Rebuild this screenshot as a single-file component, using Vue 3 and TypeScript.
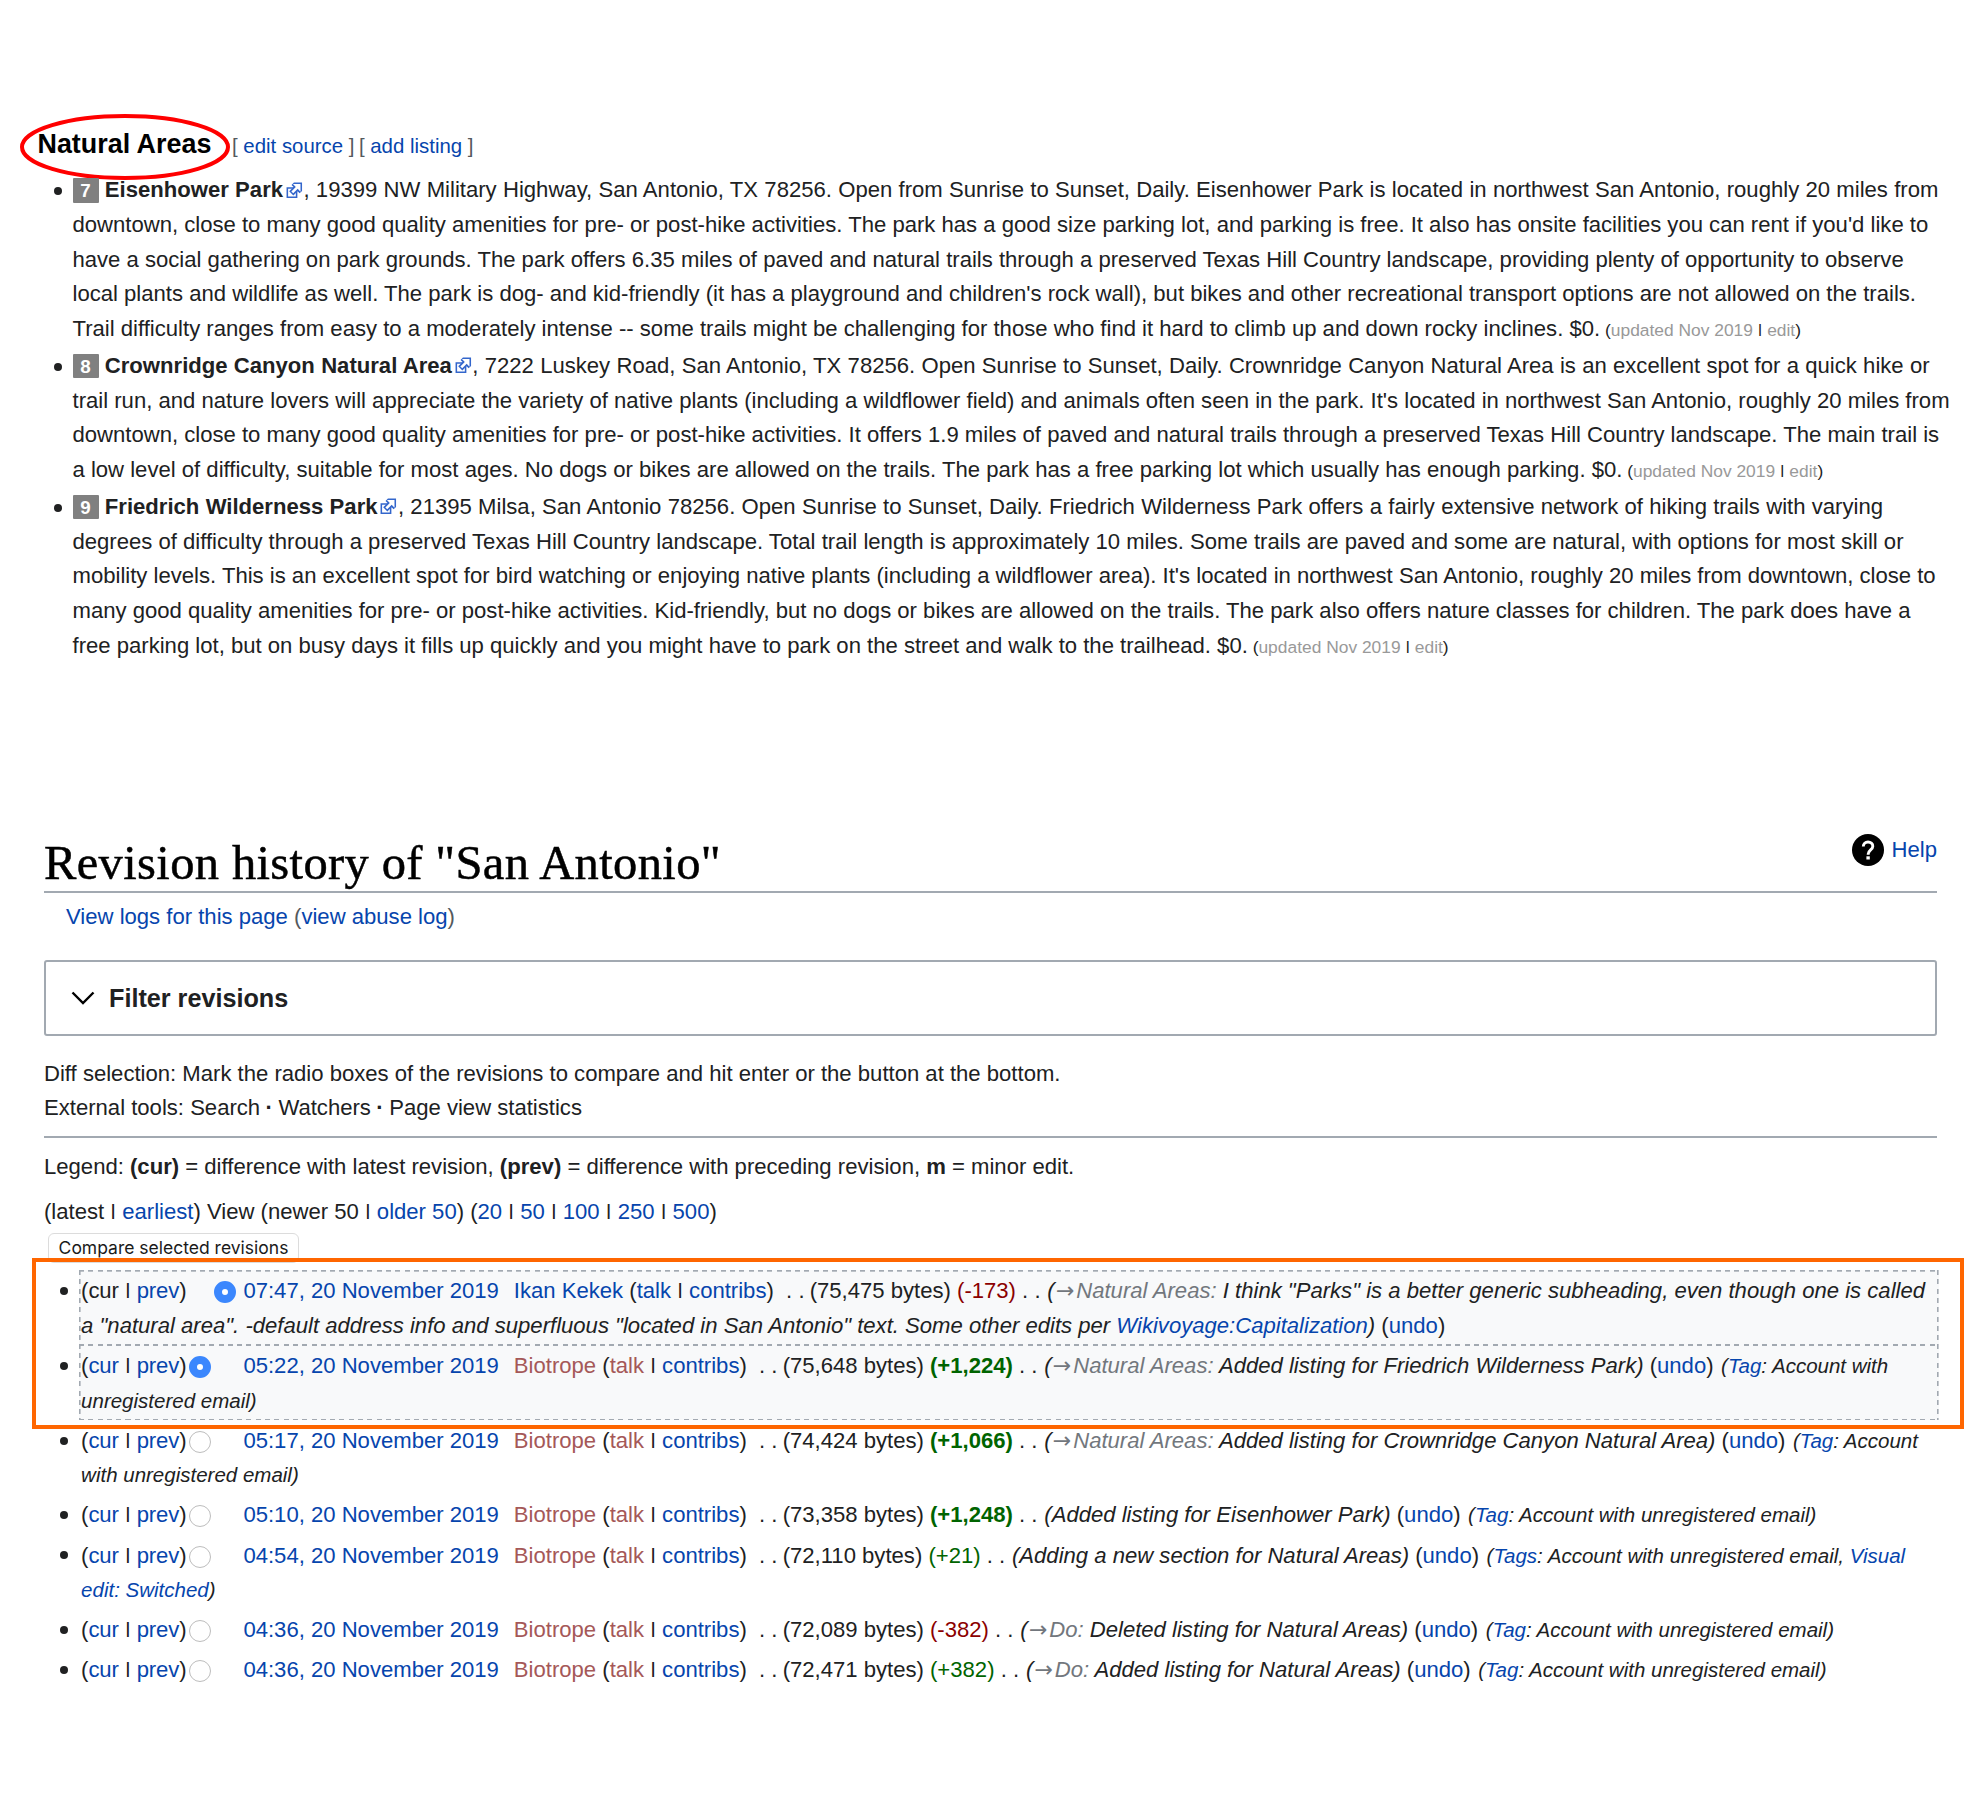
<script setup lang="ts">
type Seg = [text: string, cls?: string]

interface Listing {
  marker: number
  name: string
  lines: string[]
}

interface Revision {
  current?: boolean
  selected?: boolean
  time: string
  user: string
  userClass: string
  bytes: string
  delta: string
  deltaClass: string
  comment: Seg[]
  more?: Seg[]
}

const listings: Listing[] = [
  {
    marker: 7,
    name: 'Eisenhower Park',
    lines: [
      ', 19399 NW Military Highway, San Antonio, TX 78256. Open from Sunrise to Sunset, Daily. Eisenhower Park is located in northwest San Antonio, roughly 20 miles from',
      'downtown, close to many good quality amenities for pre- or post-hike activities. The park has a good size parking lot, and parking is free. It also has onsite facilities you can rent if you\'d like to',
      'have a social gathering on park grounds. The park offers 6.35 miles of paved and natural trails through a preserved Texas Hill Country landscape, providing plenty of opportunity to observe',
      'local plants and wildlife as well. The park is dog- and kid-friendly (it has a playground and children\'s rock wall), but bikes and other recreational transport options are not allowed on the trails.',
      'Trail difficulty ranges from easy to a moderately intense -- some trails might be challenging for those who find it hard to climb up and down rocky inclines. $0.',
    ],
  },
  {
    marker: 8,
    name: 'Crownridge Canyon Natural Area',
    lines: [
      ', 7222 Luskey Road, San Antonio, TX 78256. Open Sunrise to Sunset, Daily. Crownridge Canyon Natural Area is an excellent spot for a quick hike or',
      'trail run, and nature lovers will appreciate the variety of native plants (including a wildflower field) and animals often seen in the park. It\'s located in northwest San Antonio, roughly 20 miles from',
      'downtown, close to many good quality amenities for pre- or post-hike activities. It offers 1.9 miles of paved and natural trails through a preserved Texas Hill Country landscape. The main trail is',
      'a low level of difficulty, suitable for most ages. No dogs or bikes are allowed on the trails. The park has a free parking lot which usually has enough parking. $0.',
    ],
  },
  {
    marker: 9,
    name: 'Friedrich Wilderness Park',
    lines: [
      ', 21395 Milsa, San Antonio 78256. Open Sunrise to Sunset, Daily. Friedrich Wilderness Park offers a fairly extensive network of hiking trails with varying',
      'degrees of difficulty through a preserved Texas Hill Country landscape. Total trail length is approximately 10 miles. Some trails are paved and some are natural, with options for most skill or',
      'mobility levels. This is an excellent spot for bird watching or enjoying native plants (including a wildflower area). It\'s located in northwest San Antonio, roughly 20 miles from downtown, close to',
      'many good quality amenities for pre- or post-hike activities. Kid-friendly, but no dogs or bikes are allowed on the trails. The park also offers nature classes for children. The park does have a',
      'free parking lot, but on busy days it fills up quickly and you might have to park on the street and walk to the trailhead. $0.',
    ],
  },
]

const pager: Seg[] = [
  ['(latest '], ['|', 'bar'], [' '], ['earliest', 'link'], [') View (newer 50 '], ['|', 'bar'], [' '],
  ['older 50', 'link'], [') ('], ['20', 'link'], [' '], ['|', 'bar'], [' '], ['50', 'link'], [' '], ['|', 'bar'],
  [' '], ['100', 'link'], [' '], ['|', 'bar'], [' '], ['250', 'link'], [' '], ['|', 'bar'], [' '], ['500', 'link'], [')'],
]

const undo: Seg[] = [[' ('], ['undo', 'link'], [')']]

const revisions: Revision[] = [
  {
    current: true, selected: true, time: '07:47, 20 November 2019', user: 'Ikan Kekek', userClass: 'link',
    bytes: '75,475', delta: '(-173)', deltaClass: 'minus',
    comment: [['(', 'it'], ['→', 'arrow'], ['Natural Areas: ', 'it grey'], ['I think "Parks" is a better generic subheading, even though one is called', 'it']],
    more: [
      ['a "natural area". -default address info and superfluous "located in San Antonio" text. Some other edits per ', 'it'],
      ['Wikivoyage:Capitalization', 'it link'], [')', 'it'], ...undo,
    ],
  },
  {
    selected: true, time: '05:22, 20 November 2019', user: 'Biotrope', userClass: 'red',
    bytes: '75,648', delta: '(+1,224)', deltaClass: 'plus strong',
    comment: [['(', 'it'], ['→', 'arrow'], ['Natural Areas: ', 'it grey'], ['Added listing for Friedrich Wilderness Park)', 'it'], ...undo,
      [' (', 'tag first'], ['Tag', 'tag link'], [': Account with', 'tag']],
    more: [['unregistered email)', 'tag']],
  },
  {
    time: '05:17, 20 November 2019', user: 'Biotrope', userClass: 'red',
    bytes: '74,424', delta: '(+1,066)', deltaClass: 'plus strong',
    comment: [['(', 'it'], ['→', 'arrow'], ['Natural Areas: ', 'it grey'], ['Added listing for Crownridge Canyon Natural Area)', 'it'], ...undo,
      [' (', 'tag first'], ['Tag', 'tag link'], [': Account', 'tag']],
    more: [['with unregistered email)', 'tag']],
  },
  {
    time: '05:10, 20 November 2019', user: 'Biotrope', userClass: 'red',
    bytes: '73,358', delta: '(+1,248)', deltaClass: 'plus strong',
    comment: [['(Added listing for Eisenhower Park)', 'it'], ...undo,
      [' (', 'tag first'], ['Tag', 'tag link'], [': Account with unregistered email)', 'tag']],
  },
  {
    time: '04:54, 20 November 2019', user: 'Biotrope', userClass: 'red',
    bytes: '72,110', delta: '(+21)', deltaClass: 'plus',
    comment: [['(Adding a new section for Natural Areas)', 'it'], ...undo,
      [' (', 'tag first'], ['Tags', 'tag link'], [': Account with unregistered email, ', 'tag'], ['Visual', 'tag link']],
    more: [['edit: Switched', 'tag link'], [')', 'tag']],
  },
  {
    time: '04:36, 20 November 2019', user: 'Biotrope', userClass: 'red',
    bytes: '72,089', delta: '(-382)', deltaClass: 'minus',
    comment: [['(', 'it'], ['→', 'arrow'], ['Do: ', 'it grey'], ['Deleted listing for Natural Areas)', 'it'], ...undo,
      [' (', 'tag first'], ['Tag', 'tag link'], [': Account with unregistered email)', 'tag']],
  },
  {
    time: '04:36, 20 November 2019', user: 'Biotrope', userClass: 'red',
    bytes: '72,471', delta: '(+382)', deltaClass: 'plus',
    comment: [['(', 'it'], ['→', 'arrow'], ['Do: ', 'it grey'], ['Added listing for Natural Areas)', 'it'], ...undo,
      [' (', 'tag first'], ['Tag', 'tag link'], [': Account with unregistered email)', 'tag']],
  },
]
</script>

<template>
  <main class="page">
    <section class="areas">
      <header class="areas-head">
        <h3>
          Natural Areas
          <svg class="ellipse" viewBox="0 0 210 66"><ellipse cx="105" cy="33" rx="103" ry="31" /></svg>
        </h3>
        <span class="edit"><i>[</i> <a>edit source</a> <i>]</i></span>
        <span class="edit"><i>[</i> <a>add listing</a> <i>]</i></span>
      </header>
      <ul class="listings">
        <li v-for="l in listings" :key="l.marker" class="listing">
          <div v-for="(line, i) in l.lines" :key="i" class="line">
            <template v-if="i === 0">
              <span class="marker">{{ l.marker }}</span><b>{{ l.name }}</b><svg class="ext" viewBox="0 0 12 12">
                <path fill="#fff" stroke="#36c" d="M1.5 4.518h5.982V10.5H1.5z" />
                <path fill="#36c" d="M5.765 1H11v5.39L9.427 7.937l-1.31-1.31L5.393 9.35l-2.69-2.688 2.81-2.808L4.2 2.544z" />
                <path fill="#fff" d="M9.995 2.004l.022 4.885L8.2 5.07 5.32 7.95 4.09 6.723l2.882-2.88-1.85-1.852z" />
              </svg>
            </template><span>{{ line }}</span><span v-if="i === l.lines.length - 1" class="updated"> (<i>updated Nov 2019</i> <span class="bar">|</span> <i>edit</i>)</span>
          </div>
        </li>
      </ul>
    </section>

    <section class="history">
      <header class="title">
        <h1>Revision history of "San Antonio"</h1>
        <div class="help">
          <svg viewBox="0 0 32 32">
            <circle cx="16" cy="16" r="16" />
            <path fill="none" stroke="#fff" stroke-width="2.9" d="M11.3 12.6C11.3 9.7 13.3 8 16 8s4.8 1.7 4.8 4.2c0 3.6-4.6 3.8-4.6 7.9v.6" />
            <rect x="14.4" y="22.3" width="3.4" height="3.2" fill="#fff" />
          </svg>
          <a class="link">Help</a>
        </div>
      </header>
      <p class="logs"><a class="link">View logs for this page</a> (<a class="link">view abuse log</a>)</p>
      <div class="filter">
        <svg viewBox="0 0 24 14"><path d="M1.5 1.5 12 12 22.5 1.5" /></svg>
        <span>Filter revisions</span>
      </div>
      <p class="intro line">Diff selection: Mark the radio boxes of the revisions to compare and hit enter or the button at the bottom.</p>
      <p class="line">External tools: Search <b class="sep">·</b> Watchers <b class="sep">·</b> Page view statistics</p>
      <hr />
      <p class="line">Legend: <b>(cur)</b> = difference with latest revision, <b>(prev)</b> = difference with preceding revision, <b>m</b> = minor edit.</p>
      <p class="pager line"><span v-for="(s, i) in pager" :key="i" :class="s[1]">{{ s[0] }}</span></p>
      <button class="compare">Compare selected revisions</button>

      <div class="revisions">
        <div class="frame"></div>
        <ul>
          <li v-for="(r, i) in revisions" :key="i" class="revision" :class="{ chosen: r.selected, older: r.selected && !r.current, double: r.more }">
            <div class="line">
              <span class="nav">(<span :class="{ link: !r.current }">cur</span> <span class="bar">|</span> <span class="link">prev</span>)</span><span
                class="picker" :class="{ right: r.current }"><span class="radio" :class="{ on: r.selected }"></span></span><span
                class="link time">{{ r.time }}</span><span :class="r.userClass">{{ r.user }}</span><span> (</span><span
                :class="r.userClass">talk</span>&nbsp;<span class="bar">|</span>&nbsp;<span
                class="link">contribs</span><span class="gap">)&nbsp; . . </span><span>({{ r.bytes }} bytes) </span><span
                :class="r.deltaClass">{{ r.delta }}</span><span class="dots"> . . </span><span
                v-for="(s, k) in r.comment" :key="k" :class="s[1]">{{ s[0] }}</span>
            </div>
            <div v-if="r.more" class="line"><span v-for="(s, k) in r.more" :key="k" :class="s[1]">{{ s[0] }}</span></div>
          </li>
        </ul>
      </div>
    </section>
  </main>
</template>

<style>
body {
  margin: 0;
  background: #fff;
}
</style>

<style scoped>
.page {
  box-sizing: border-box;
  width: 1988px;
  height: 1810px;
  overflow: hidden;
  padding-top: 126px;
  color: #202122;
  font-family: "Liberation Sans", Arial, sans-serif;
  font-size: 22.1px;
}
h1, h3, p, ul {
  margin: 0;
  padding: 0;
  font-weight: normal;
}
ul {
  list-style: none;
}
.line {
  height: 34.7px;
  line-height: 34.7px;
  white-space: pre;
}
.link, .edit a {
  color: #0645ad;
}
.bar {
  display: inline-block;
  line-height: 1;
  transform: scaleY(0.76);
  transform-origin: 50% 18%;
}
.areas {
  height: 704px;
}
.areas-head {
  display: flex;
  align-items: baseline;
  height: 47.1px;
  padding-left: 37.5px;
  line-height: 36px;
}
h3 {
  position: relative;
  width: 194.5px;
  color: #000;
  font-size: 26.9px;
  font-weight: bold;
  white-space: nowrap;
}
.ellipse {
  position: absolute;
  left: -17.5px;
  top: -12px;
  width: 210px;
  height: 66px;
  fill: none;
  stroke: #f00;
  stroke-width: 4;
}
.edit {
  margin-right: 4.5px;
  font-size: 20.4px;
  white-space: pre;
}
.edit i {
  color: #54595d;
  font-style: normal;
}
.listing, .revision {
  position: relative;
}
.listing {
  margin: 0 0 2.1px 72.5px;
}
.listing .line {
  height: 34.74px;
  line-height: 34.74px;
}
.listing .line:first-child {
  word-spacing: 0.16px;
}
.listing::before, .revision::before {
  content: "";
  position: absolute;
  left: -18.5px;
  top: 13.9px;
  width: 8px;
  height: 8px;
  border-radius: 50%;
  background: #202122;
}
.marker {
  display: inline-block;
  width: 26px;
  height: 24.5px;
  margin-right: 6.3px;
  border-radius: 1px;
  background: #808080;
  color: #fff;
  font-size: 18.8px;
  font-weight: bold;
  line-height: 26px;
  text-align: center;
}
.ext {
  width: 18.6px;
  height: 18.6px;
  margin-left: 1.8px;
  vertical-align: -2px;
}
.updated {
  font-size: 17.4px;
}
.updated i {
  color: #999;
  font-style: normal;
}
.history {
  width: 1893px;
  margin-left: 44px;
}
.title {
  display: flex;
  justify-content: space-between;
  height: 60.5px;
  border-bottom: 2px solid #a2a9b1;
  margin-bottom: -0.4px;
}
h1 {
  color: #000;
  font-family: "Liberation Serif", serif;
  font-size: 48.5px;
  letter-spacing: 0.37px;
  line-height: 65px;
  white-space: nowrap;
  -webkit-text-stroke: 0.5px #000;
}
.help {
  display: flex;
  align-items: center;
  gap: 8px;
  height: 40px;
}
.help svg {
  width: 32px;
  height: 32px;
}
.logs {
  height: 68px;
  padding-left: 22px;
  color: #54595d;
  line-height: 50px;
}
.filter {
  display: flex;
  align-items: center;
  gap: 14px;
  box-sizing: border-box;
  height: 76px;
  padding: 0 0 1px 25px;
  border: 2px solid #a2a9b1;
  border-radius: 3px;
  font-size: 25.2px;
  font-weight: bold;
}
.filter span {
  padding-top: 1px;
}
.filter svg {
  width: 24px;
  height: 14px;
  fill: none;
  stroke: #000;
  stroke-width: 2.4;
}
.intro {
  margin-top: 20.4px;
}
hr {
  height: 2px;
  margin: 10px 0 12px;
  border: 0;
  background: #a2a9b1;
}
.sep {
  margin: 0 -0.7px;
}
.pager {
  margin-top: 10.9px;
}
.compare {
  display: block;
  box-sizing: border-box;
  width: 251px;
  height: 30px;
  margin: 3.1px 0 0 4px;
  padding: 0;
  border: 1.5px solid #dcdcdc;
  border-radius: 6px;
  background: #fff;
  color: #1a1a1a;
  font-family: Inter, sans-serif;
  font-size: 17.5px;
  line-height: 28px;
}
.revisions {
  position: relative;
  margin-top: 6.5px;
}
.frame {
  position: absolute;
  z-index: 1;
  box-sizing: border-box;
  left: -12px;
  top: -11.5px;
  width: 1931.5px;
  height: 171px;
  border: 4px solid #ff6600;
}
.revision {
  box-sizing: border-box;
  height: 40.3px;
  margin: 0 -2px 0 34.5px;
  padding: 4.7px 0 0 2.6px;
}
.revision.double {
  height: 74.6px;
}
.revision::before {
  top: 17.6px;
}
.chosen {
  background:
    repeating-linear-gradient(90deg, #a2a9b1 0 5px, transparent 5px 9.3px) 0 0 / 100% 1.7px no-repeat,
    repeating-linear-gradient(#a2a9b1 0 5px, transparent 5px 9.3px) 0 0 / 1.6px 100% no-repeat,
    repeating-linear-gradient(#a2a9b1 0 5px, transparent 5px 9.3px) 100% 0 / 1.6px 100% no-repeat,
    #f8f9fa;
}
.revision.older {
  height: 76.1px;
  margin-bottom: -1.5px;
  background:
    repeating-linear-gradient(90deg, #a2a9b1 0 5px, transparent 5px 9.3px) 0 0 / 100% 2.2px no-repeat,
    repeating-linear-gradient(90deg, #a2a9b1 0 5px, transparent 5px 9.3px) 0 100% / 100% 1.7px no-repeat,
    repeating-linear-gradient(#a2a9b1 0 5px, transparent 5px 9.3px) 0 0 / 1.6px 100% no-repeat,
    repeating-linear-gradient(#a2a9b1 0 5px, transparent 5px 9.3px) 100% 0 / 1.6px 100% no-repeat,
    #f8f9fa;
}
.nav {
  display: inline-block;
  width: 108.1px;
  letter-spacing: -0.08px;
}
.picker {
  display: inline-block;
  width: 54.2px;
}
.picker.right .radio {
  margin-left: 25px;
}
.radio {
  display: inline-block;
  box-sizing: border-box;
  width: 22px;
  height: 22px;
  border: 1.5px solid #bdbdbd;
  border-radius: 50%;
  background: #fff;
  vertical-align: -5px;
}
.radio.on {
  border: 8px solid #3b87fd;
}
.time {
  margin-right: 15px;
}
.gap {
  margin-right: -1px;
}
.dots {
  margin-right: 0.7px;
}
.red {
  color: #a55858;
}
.minus {
  color: #8b0000;
}
.plus {
  color: #006400;
}
.strong {
  font-weight: bold;
}
.it {
  font-style: italic;
}
.grey {
  color: #72777d;
}
.arrow {
  margin: 0 1.8px 0 1.2px;
  color: #72777d;
  font-family: "DejaVu Sans", sans-serif;
  line-height: 1;
}
.tag {
  font-size: 20.5px;
  font-style: italic;
}
.first {
  margin-left: 1.8px;
}
</style>
